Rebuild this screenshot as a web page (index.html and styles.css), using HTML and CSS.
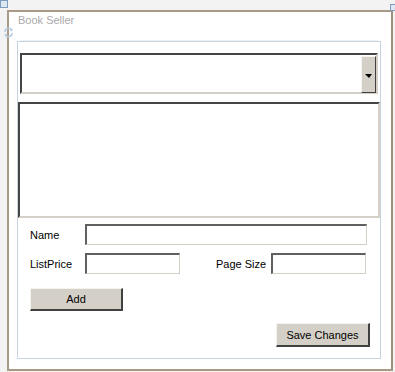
FILE: index.html
```html
<!DOCTYPE html>
<html lang="en">
<head>
  <meta charset="UTF-8" />
  <meta name="viewport" content="width=device-width, initial-scale=1" />
  <title>Book Seller</title>
  <link rel="stylesheet" href="styles.css">
</head>
<body>
  <div class="handle handle-left"></div>
  <div class="handle handle-right"></div>
  <svg class="refresh" width="11" height="11" viewBox="0 0 11 11">
    <path d="M2 5 A3.5 3.5 0 0 1 8.5 3" fill="none" stroke="#b9cde3" stroke-width="1.6"/>
    <path d="M9 6 A3.5 3.5 0 0 1 2.5 8" fill="none" stroke="#b9cde3" stroke-width="1.6"/>
    <path d="M7 1 L10 2.5 L8 5 Z" fill="#b9cde3"/>
    <path d="M4 10 L1 8.5 L3 6 Z" fill="#b9cde3"/>
  </svg>

  <div class="frame">
    <div class="title">Book Seller</div>

    <div class="panel">
      <div class="combo">
        <div class="combo-btn"><span class="arrow"></span></div>
      </div>

      <div class="listbox"></div>

      <div class="form">
        <div class="row">
          <label class="lbl">Name</label>
          <input type="text" class="field field-wide">
        </div>
        <div class="row">
          <label class="lbl">ListPrice</label>
          <input type="text" class="field">
          <label class="lbl lbl-right">Page Size</label>
          <input type="text" class="field">
        </div>
        <div class="row row-add">
          <button class="btn btn-add">Add</button>
        </div>
        <div class="row row-save">
          <button class="btn btn-save">Save Changes</button>
        </div>
      </div>
    </div>
  </div>
</body>
</html>
```

FILE: styles.css
```css
body {
  margin: 0;
  font-family: "Liberation Sans", Arial, sans-serif;
  font-size: 11px;
  background-color: #f3f3f3;
  position: relative;
  width: 395px;
  height: 372px;
  overflow: hidden;
}

.handle {
  position: absolute;
  background-color: #dfe8f2;
  border: 1px solid #7d9cc0;
  box-sizing: border-box;
}

.handle-left {
  left: 0;
  top: 0;
  width: 8px;
  height: 8px;
}

.handle-right {
  left: 390px;
  top: 4px;
  width: 8px;
  height: 7px;
}

.refresh {
  position: absolute;
  left: 3px;
  top: 27px;
}

.frame {
  box-sizing: border-box;
  margin: 10px 0 0 7px;
  width: 386px;
  height: 361px;
  border: 2px solid #a89a86;
  border-right-color: #9c8f7e;
  background-color: #fff;
  display: flex;
  flex-direction: column;
}

.title {
  color: #a9a9a9;
  height: 29px;
  padding: 2px 0 0 9px;
  box-sizing: border-box;
  line-height: 13px;
}

.panel {
  box-sizing: border-box;
  margin-left: 8px;
  width: 364px;
  height: 318px;
  border: 1px solid #c6d3e0;
  box-shadow: 0 -4px 0 -3px #eef1f4;
  display: flex;
  flex-direction: column;
}

.combo {
  box-sizing: border-box;
  margin: 11px 0 0 2px;
  width: 358px;
  height: 41px;
  border: 2px solid;
  border-color: #444 #d4d0c8 #d4d0c8 #444;
  display: flex;
  justify-content: flex-end;
  padding: 1px 0 0 0;
}

.combo-btn {
  box-sizing: border-box;
  width: 15px;
  height: 37px;
  background-color: #d4d0c8;
  border: 1px solid;
  border-color: #f4f3f0 #404040 #404040 #f4f3f0;
  display: flex;
  align-items: center;
  justify-content: center;
}

.arrow {
  width: 0;
  height: 0;
  border-left: 4px solid transparent;
  border-right: 3px solid transparent;
  border-top: 4px solid #000;
  margin-top: 2px;
}

.listbox {
  box-sizing: border-box;
  margin: 8px 0 0 0;
  width: 362px;
  height: 116px;
  border: 2px solid;
  border-color: #444 #d4d0c8 #d4d0c8 #444;
}

.form {
  display: flex;
  flex-direction: column;
  padding: 6px 12px 0 12px;
}

.row {
  display: flex;
  align-items: center;
  height: 21px;
}

.row + .row {
  margin-top: 8px;
}

.lbl {
  width: 55px;
  color: #000;
}

.lbl-right {
  margin-left: 36px;
}

.field {
  box-sizing: border-box;
  width: 95px;
  height: 21px;
  margin: 0;
  border: 1px solid;
  border-color: #606060 #d4d0c8 #d4d0c8 #606060;
  border-width: 2px 1px 1px 2px;
  background-color: #fff;
  outline: none;
}

.field-wide {
  width: 282px;
}

.btn {
  box-sizing: border-box;
  height: 23px;
  margin: 0;
  padding: 0;
  font-family: inherit;
  font-size: 11px;
  color: #000;
  background-color: #d4d0c8;
  border: 1px solid;
  border-color: #f4f3f0 #404040 #404040 #f4f3f0;
  border-width: 1px 2px 2px 1px;
}

.row-add {
  margin-top: 14px !important;
  height: 23px;
}

.btn-add {
  width: 93px;
}

.row-save {
  margin-top: 12px !important;
  height: 24px;
  justify-content: flex-end;
  margin-right: -2px;
}

.btn-save {
  width: 94px;
  height: 24px;
}
```
